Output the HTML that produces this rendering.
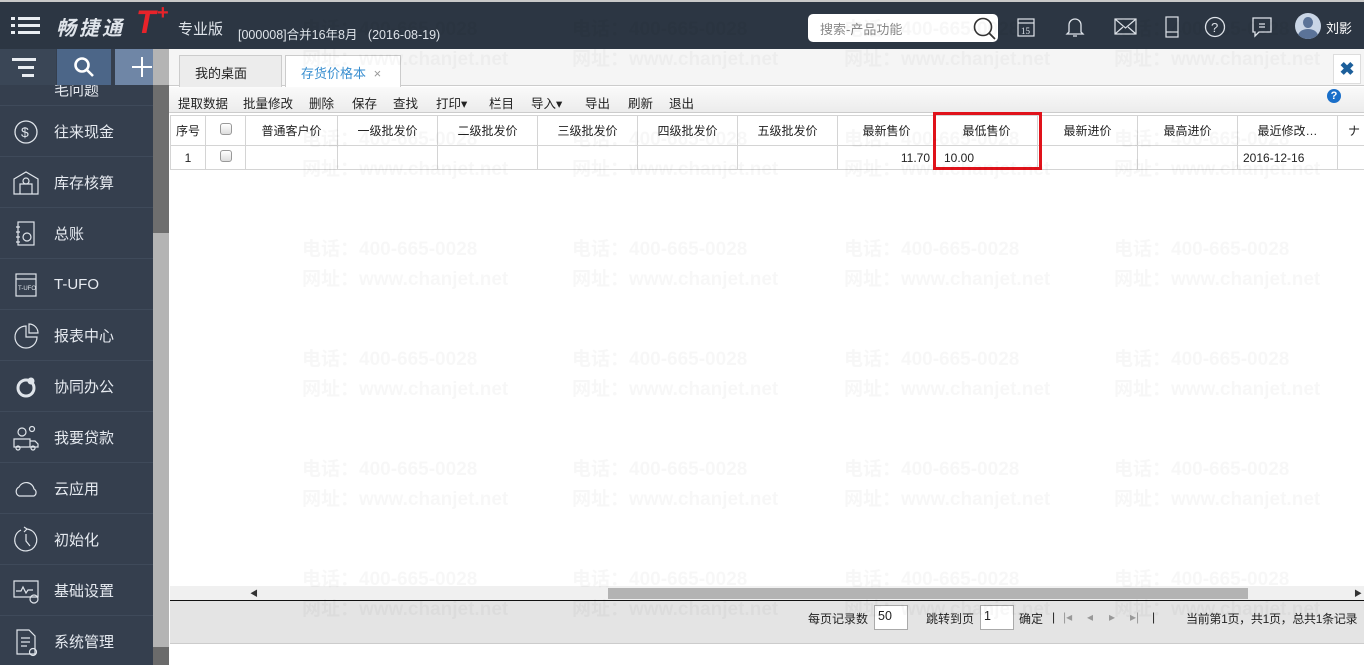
<!DOCTYPE html>
<html><head><meta charset="utf-8"><style>
*{margin:0;padding:0;box-sizing:border-box}
body{width:1364px;height:665px;overflow:hidden;position:relative;background:#fff;font-family:"Liberation Sans","Noto Sans CJK SC",sans-serif;font-size:13px;color:#222}
.abs{position:absolute}
#top{left:0;top:0;width:1364px;height:49px;background:#2c3643;border-top:2px solid #c9c9c9}
#side{left:0;top:49px;width:153px;height:616px;background:#353f4e}
.mi{position:absolute;left:0;width:153px;height:51px;border-bottom:1px solid #3f4a5a;color:#e6eaf0;font-size:15px}
.mi span{position:absolute;left:54px;top:15px}
.mi svg{position:absolute;left:12px;top:12px}
#wmw{position:absolute;left:0;top:0;width:1364px;height:665px;overflow:hidden;z-index:10;pointer-events:none}
.wm{position:absolute;color:rgba(0,0,0,0.03);font-size:19px;font-weight:bold;white-space:nowrap;line-height:30px}
table{border-collapse:collapse;position:absolute;left:170px;top:115px;table-layout:fixed;width:1194px}
td{border:1px solid #d4d4d4;height:30px;font-size:12px;text-align:center;white-space:nowrap;overflow:hidden}
tr.d td{height:24px}
.cb{display:inline-block;width:12px;height:12px;border:1px solid #999;border-radius:3px;background:linear-gradient(#fff,#ddd)}
.tb span{position:absolute;top:93px;font-size:12.5px;white-space:nowrap}
.ft{position:absolute;font-size:12px;white-space:nowrap;top:610px}
.inp{position:absolute;top:605px;height:25px;background:#fff;border:1px solid #aaa;padding:3px;font-size:12.5px}
</style></head><body>
<div id="top" class="abs">
 <svg class="abs" style="left:11px;top:15px" width="30" height="18"><g fill="#e9edf2"><rect x="0" y="0" width="4" height="3"/><rect x="7" y="0" width="22" height="3"/><rect x="0" y="7" width="4" height="3"/><rect x="7" y="7" width="22" height="3"/><rect x="0" y="14" width="4" height="3"/><rect x="7" y="14" width="22" height="3"/></g></svg>
 <div class="abs" style="left:56px;top:10px;color:#dfe4ea;font-size:20px;font-style:italic;font-weight:bold;letter-spacing:3px">畅捷通</div>
 <div class="abs" style="left:136px;top:2px;color:#e8232a;font-size:32px;font-style:italic;font-weight:bold;font-family:'Liberation Sans',sans-serif">T</div>
 <div class="abs" style="left:157px;top:0px;color:#e8232a;font-size:20px;font-weight:bold">+</div>
 <div class="abs" style="left:178px;top:16px;color:#dfe4ea;font-size:15px">专业版</div>
 <div class="abs" style="left:238px;top:22px;color:#dfe4ea;font-size:12.5px">[000008]合并16年8月&nbsp;&nbsp;&nbsp;(2016-08-19)</div>
 <div class="abs" style="left:808px;top:12px;width:190px;height:28px;background:#fff;border-radius:5px;color:#888;font-size:13px;padding:5px 12px">搜索-产品功能</div>
 <svg class="abs" style="left:972px;top:14px" width="26" height="26"><circle cx="11" cy="11" r="8.5" fill="none" stroke="#333" stroke-width="1.6"/><line x1="17" y1="17" x2="23" y2="23" stroke="#333" stroke-width="1.8"/></svg>
 <svg class="abs" style="left:1016px;top:14px" width="20" height="22" fill="none" stroke="#dfe4ea" stroke-width="1.2"><rect x="2" y="3" width="16" height="17"/><line x1="2" y1="7" x2="18" y2="7"/><text x="5" y="18" font-size="9" fill="#dfe4ea" stroke="none" font-family="Liberation Serif">15</text></svg>
 <svg class="abs" style="left:1064px;top:13px" width="22" height="24" fill="none" stroke="#dfe4ea" stroke-width="1.3"><path d="M5 17V10a6 6 0 0 1 12 0v7l2 2H3z M9 21h4"/></svg>
 <svg class="abs" style="left:1114px;top:16px" width="24" height="18" fill="none" stroke="#dfe4ea" stroke-width="1.2"><rect x="1" y="1" width="21" height="15"/><path d="M1 1l10.5 9L22 1M1 16l8-7M22 16l-8-7"/></svg>
 <svg class="abs" style="left:1164px;top:13px" width="16" height="24" fill="none" stroke="#dfe4ea" stroke-width="1.2"><rect x="2" y="2" width="12" height="20"/><line x1="2" y1="17" x2="14" y2="17"/></svg>
 <svg class="abs" style="left:1204px;top:14px" width="22" height="22" fill="none" stroke="#dfe4ea" stroke-width="1.3"><circle cx="11" cy="11" r="9.5"/><text x="7" y="16" font-size="13" fill="#dfe4ea" stroke="none">?</text></svg>
 <svg class="abs" style="left:1250px;top:14px" width="24" height="22" fill="none" stroke="#dfe4ea" stroke-width="1.3"><path d="M3 2h18v14H9l-4 4v-4H3z M9 8h6M9 11h6"/></svg>
 <div class="abs" style="left:1295px;top:11px;width:26px;height:26px;border-radius:50%;background:#c9d5e6;overflow:hidden"><div style="position:absolute;left:8px;top:4px;width:10px;height:11px;border-radius:50%;background:#5b7398"></div><div style="position:absolute;left:3px;top:16px;width:20px;height:14px;border-radius:50%;background:#5b7398"></div></div>
 <div class="abs" style="left:1326px;top:16px;color:#fff;font-size:13px">刘影</div>
</div>
<div id="side" class="abs">
 <div class="mi" style="top:36px;height:21px;overflow:hidden"><span style="top:-6px;left:54px;font-size:15px">毛问题</span></div>
 <div class="abs" style="left:0;top:0;width:56px;height:36px;background:#3a4656"></div>
 <svg class="abs" style="left:12px;top:9px" width="26" height="20" fill="#e9edf2"><rect x="0" y="0" width="24" height="3"/><rect x="6" y="8" width="16" height="3"/><rect x="10" y="16" width="12" height="3"/></svg>
 <div class="abs" style="left:57px;top:0;width:54px;height:36px;background:#4c6688"></div>
 <svg class="abs" style="left:72px;top:6px" width="24" height="24" fill="none" stroke="#fff" stroke-width="2.6"><circle cx="10" cy="10" r="6.5"/><line x1="15" y1="15" x2="21" y2="21"/></svg>
 <div class="abs" style="left:115px;top:0;width:38px;height:36px;background:#6f86a6"></div>
 <svg class="abs" style="left:130px;top:6px" width="24" height="24" stroke="#fff" stroke-width="2"><line x1="12" y1="2" x2="12" y2="22"/><line x1="2" y1="12" x2="22" y2="12"/></svg>
 <div class="mi" style="top:57px"><svg width="30" height="28" fill="none" stroke="#dfe4ea" stroke-width="1.3"><circle cx="14" cy="14" r="11"/><text x="9" y="19" font-size="14" fill="#dfe4ea" stroke="none">$</text></svg><span>往来现金</span></div>
 <div class="mi" style="top:108px"><svg width="30" height="28" fill="none" stroke="#dfe4ea" stroke-width="1.2"><path d="M2 10L14 3l12 7v15H2z M8 25V15h12v10"/><circle cx="14" cy="12" r="3"/></svg><span>库存核算</span></div>
 <div class="mi" style="top:159px"><svg width="30" height="28" fill="none" stroke="#dfe4ea" stroke-width="1.2"><rect x="6" y="2" width="16" height="23"/><circle cx="15" cy="17" r="4"/><path d="M4 7h4M4 12h4M4 17h4M4 22h4"/></svg><span>总账</span></div>
 <div class="mi" style="top:210px"><svg width="30" height="28" fill="none" stroke="#dfe4ea" stroke-width="1.2"><rect x="4" y="3" width="20" height="22"/><line x1="4" y1="8" x2="24" y2="8"/><text x="6" y="19" font-size="6" fill="#dfe4ea" stroke="none">T-UFO</text></svg><span style="top:17px">T-UFO</span></div>
 <div class="mi" style="top:261px"><svg width="30" height="28" fill="none" stroke="#dfe4ea" stroke-width="1.2"><path d="M14 4a11 11 0 1 0 11 11H14z M17 2a9 9 0 0 1 9 9h-9z"/></svg><span>报表中心</span></div>
 <div class="mi" style="top:312px"><svg width="30" height="28" fill="none" stroke="#dfe4ea" stroke-width="3"><circle cx="14" cy="15" r="8"/><circle cx="19" cy="8" r="2" fill="#dfe4ea"/></svg><span>协同办公</span></div>
 <div class="mi" style="top:363px"><svg width="30" height="28" fill="none" stroke="#dfe4ea" stroke-width="1.2"><circle cx="10" cy="8" r="4"/><circle cx="20" cy="5" r="2.5"/><path d="M2 15h16v8H2z M18 17h5l3 3v3h-8"/><circle cx="6" cy="24" r="2"/><circle cx="21" cy="24" r="2"/></svg><span>我要贷款</span></div>
 <div class="mi" style="top:414px"><svg width="30" height="28" fill="none" stroke="#dfe4ea" stroke-width="1.2"><path d="M7 21a5 5 0 0 1 0-9 8 8 0 0 1 15 2 4 4 0 0 1 0 7z"/></svg><span>云应用</span></div>
 <div class="mi" style="top:465px"><svg width="30" height="28" fill="none" stroke="#dfe4ea" stroke-width="1.2"><path d="M9 4a11 11 0 1 0 6-1 M12 1l3 2-3 3 M14 8v7l4 5"/></svg><span>初始化</span></div>
 <div class="mi" style="top:516px"><svg width="30" height="28" fill="none" stroke="#dfe4ea" stroke-width="1.2"><path d="M2 4h24v16H2z M4 14h5l2-4 3 6 2-3h5"/><circle cx="22" cy="22" r="4"/></svg><span>基础设置</span></div>
 <div class="mi" style="top:567px;border:none"><svg width="30" height="30" fill="none" stroke="#dfe4ea" stroke-width="1.2"><path d="M5 2h12l6 6v18H5z M9 10h9M9 14h9M9 18h6"/><circle cx="21" cy="24" r="3.5"/></svg><span>系统管理</span></div>
 <div class="abs" style="left:153px;top:0;width:16px;height:616px;background:#b4b4b4"></div>
 <div class="abs" style="left:153px;top:36px;width:16px;height:148px;background:#6e6e6e"></div>
 <div class="abs" style="left:153px;top:598px;width:16px;height:18px;background:#6b6b6b"></div>
</div>
<div class="abs" style="left:169px;top:49px;width:1195px;height:37px;background:#f5f5f5;border-bottom:1px solid #ccc"></div>
<div class="abs" style="left:179px;top:55px;width:103px;height:32px;background:#ececec;border:1px solid #ccc;border-bottom:none;padding:7px 15px;font-size:13px">我的桌面</div>
<div class="abs" style="left:285px;top:55px;width:116px;height:32px;background:#fff;border:1px solid #ccc;border-bottom:none;padding:7px 15px;font-size:13px;color:#3a8fd0">存货价格本 <span style="color:#999;margin-left:4px">×</span></div>
<div class="abs" style="left:1333px;top:54px;width:28px;height:30px;background:#fff;border:1px solid #ddd;color:#1c5f9b;font-size:18px;font-weight:bold;text-align:center;line-height:28px">✖</div>
<div class="abs" style="left:169px;top:87px;width:1195px;height:26px;background:linear-gradient(#fafafa,#ececec);border-bottom:1px solid #ccc"></div>
<div class="tb"><span style="left:178px">提取数据</span><span style="left:243px">批量修改</span><span style="left:309px">删除</span><span style="left:352px">保存</span><span style="left:393px">查找</span><span style="left:436px">打印▾</span><span style="left:489px">栏目</span><span style="left:531px">导入▾</span><span style="left:585px">导出</span><span style="left:628px">刷新</span><span style="left:669px">退出</span></div>
<div class="abs" style="left:1327px;top:89px;width:14px;height:14px;border-radius:50%;background:#1a6fc9;color:#fff;font-size:11px;font-weight:bold;text-align:center;line-height:14px">?</div>
<table>
<colgroup><col style="width:35px"><col style="width:40px"><col style="width:92px"><col style="width:100px"><col style="width:100px"><col style="width:100px"><col style="width:100px"><col style="width:100px"><col style="width:98px"><col style="width:102px"><col style="width:100px"><col style="width:100px"><col style="width:100px"><col style="width:27px"></colgroup>
<tr><td>序号</td><td><i class="cb"></i></td><td>普通客户价</td><td>一级批发价</td><td>二级批发价</td><td>三级批发价</td><td>四级批发价</td><td>五级批发价</td><td>最新售价</td><td>最低售价</td><td>最新进价</td><td>最高进价</td><td>最近修改…</td><td style="text-align:left;padding-left:10px">ナ</td></tr>
<tr class="d"><td>1</td><td><i class="cb"></i></td><td></td><td></td><td></td><td></td><td></td><td></td><td style="text-align:right;padding-right:5px">11.70</td><td style="text-align:left;padding-left:8px">10.00</td><td></td><td></td><td style="text-align:left;padding-left:5px">2016-12-16</td><td></td></tr>
</table>
<div class="abs" style="left:933px;top:112px;width:109px;height:58px;border:3px solid #e0121a"></div>
<div class="abs" style="left:170px;top:586px;width:1194px;height:14px;background:#f0f0f0"></div>
<div class="abs" style="left:608px;top:588px;width:640px;height:11px;background:#b3b3b3"></div>
<div class="abs" style="left:250px;top:588px;font-size:8px;color:#333">◀</div>
<div class="abs" style="left:1354px;top:588px;font-size:8px;color:#333">▶</div>
<div class="abs" style="left:170px;top:600px;width:1194px;height:44px;background:#e4e4e4;border-top:1px solid #111;border-bottom:1px solid #ccc"></div>
<div class="ft" style="left:808px">每页记录数</div>
<div class="inp" style="left:874px;width:34px">50</div>
<div class="ft" style="left:926px">跳转到页</div>
<div class="inp" style="left:980px;width:34px">1</div>
<div class="ft" style="left:1019px">确定</div>
<div class="ft" style="left:1052px">|</div>
<div class="ft" style="left:1063px;color:#999">|◂</div>
<div class="ft" style="left:1087px;color:#999">◂</div>
<div class="ft" style="left:1109px;color:#999">▸</div>
<div class="ft" style="left:1130px;color:#999">▸|</div>
<div class="ft" style="left:1152px">|</div>
<div class="ft" style="left:1186px;letter-spacing:-0.3px">当前第1页，共1页，总共1条记录</div>
<div id="wmw">
<div class="wm" style="left:302px;top:15px">电话：400-665-0028<br>网址：www.chanjet.net</div>
<div class="wm" style="left:572px;top:15px">电话：400-665-0028<br>网址：www.chanjet.net</div>
<div class="wm" style="left:844px;top:15px">电话：400-665-0028<br>网址：www.chanjet.net</div>
<div class="wm" style="left:1114px;top:15px">电话：400-665-0028<br>网址：www.chanjet.net</div>
<div class="wm" style="left:302px;top:125px">电话：400-665-0028<br>网址：www.chanjet.net</div>
<div class="wm" style="left:572px;top:125px">电话：400-665-0028<br>网址：www.chanjet.net</div>
<div class="wm" style="left:844px;top:125px">电话：400-665-0028<br>网址：www.chanjet.net</div>
<div class="wm" style="left:1114px;top:125px">电话：400-665-0028<br>网址：www.chanjet.net</div>
<div class="wm" style="left:302px;top:235px">电话：400-665-0028<br>网址：www.chanjet.net</div>
<div class="wm" style="left:572px;top:235px">电话：400-665-0028<br>网址：www.chanjet.net</div>
<div class="wm" style="left:844px;top:235px">电话：400-665-0028<br>网址：www.chanjet.net</div>
<div class="wm" style="left:1114px;top:235px">电话：400-665-0028<br>网址：www.chanjet.net</div>
<div class="wm" style="left:302px;top:345px">电话：400-665-0028<br>网址：www.chanjet.net</div>
<div class="wm" style="left:572px;top:345px">电话：400-665-0028<br>网址：www.chanjet.net</div>
<div class="wm" style="left:844px;top:345px">电话：400-665-0028<br>网址：www.chanjet.net</div>
<div class="wm" style="left:1114px;top:345px">电话：400-665-0028<br>网址：www.chanjet.net</div>
<div class="wm" style="left:302px;top:455px">电话：400-665-0028<br>网址：www.chanjet.net</div>
<div class="wm" style="left:572px;top:455px">电话：400-665-0028<br>网址：www.chanjet.net</div>
<div class="wm" style="left:844px;top:455px">电话：400-665-0028<br>网址：www.chanjet.net</div>
<div class="wm" style="left:1114px;top:455px">电话：400-665-0028<br>网址：www.chanjet.net</div>
<div class="wm" style="left:302px;top:565px">电话：400-665-0028<br>网址：www.chanjet.net</div>
<div class="wm" style="left:572px;top:565px">电话：400-665-0028<br>网址：www.chanjet.net</div>
<div class="wm" style="left:844px;top:565px">电话：400-665-0028<br>网址：www.chanjet.net</div>
<div class="wm" style="left:1114px;top:565px">电话：400-665-0028<br>网址：www.chanjet.net</div>
</div>
</body></html>
